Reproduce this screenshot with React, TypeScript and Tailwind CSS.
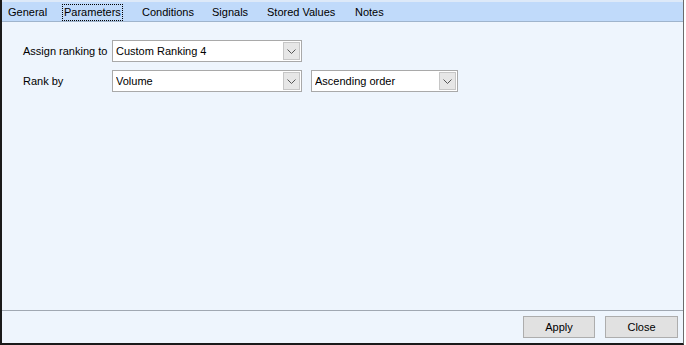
import React from "react";

const tabs = [
  { label: "General", w: "w-[56px]" },
  { label: "Parameters", w: "w-[78px]" },
  { label: "Conditions", w: "w-[70px]" },
  { label: "Signals", w: "w-[55px]" },
  { label: "Stored Values", w: "w-[88px]" },
  { label: "Notes", w: "w-[44px]" },
];

function Chevron() {
  return (
    <svg width="9" height="5" viewBox="0 0 9 5" fill="none">
      <path d="M0.5 0.5 L4.5 4.5 L8.5 0.5" stroke="#555" strokeWidth="1" />
    </svg>
  );
}

function Select({ value, width }: { value: string; width: string }) {
  return (
    <div className={`${width} h-[22px] flex items-center bg-white border border-[#a9a9a9] pl-[3px] pr-[1px]`}>
      <span className="flex-1 truncate">{value}</span>
      <div className="w-[17px] h-[18px] flex items-center justify-center bg-[#e6e6e6] border border-[#c6c6c6]">
        <Chevron />
      </div>
    </div>
  );
}

export default function App() {
  return (
    <div
      className="w-[686px] h-[345px] bg-white text-[11px] text-black"
      style={{ fontFamily: '"Liberation Sans", Arial, sans-serif' }}
    >
      <div className="w-[684px] h-[345px] flex flex-col bg-[#eef5fd] border-l-2 border-l-[#1a1a1a] border-r border-r-[#6b6b6b] border-b-2 border-b-[#1a1a1a]">
        {/* Tabs */}
        <div className="h-[22px] flex items-stretch bg-[#c0dafa] border-t-2 border-t-[#dde9f8] border-b border-b-[#9fb4cc]">
          {tabs.map((t, i) => (
            <div key={t.label} className={`${t.w} flex items-center pl-[4px] pt-[1px]`}>
              {i === 1 ? (
                <span className="px-[1px] leading-[15px] border border-dotted border-black">{t.label}</span>
              ) : (
                <span className="px-[2px] leading-[15px]">{t.label}</span>
              )}
            </div>
          ))}
        </div>

        {/* Body */}
        <div className="flex-1 pt-[18px] pl-[21px] flex flex-col gap-[8px]">
          <div className="flex items-center">
            <span className="w-[89px]">Assign ranking to</span>
            <Select value="Custom Ranking 4" width="w-[190px]" />
          </div>
          <div className="flex items-center">
            <span className="w-[89px]">Rank by</span>
            <Select value="Volume" width="w-[190px]" />
            <div className="ml-[9px]">
              <Select value="Ascending order" width="w-[147px]" />
            </div>
          </div>
        </div>

        {/* Footer */}
        <div className="h-[33px] border-t border-[#a0a8b2] flex items-start justify-end gap-[10px] pt-[5px] pr-[5px]">
          <button className="w-[72px] h-[22px] bg-[#e1e1e1] border border-[#adadad] text-[11px]">Apply</button>
          <button className="w-[73px] h-[22px] bg-[#e1e1e1] border border-[#adadad] text-[11px]">Close</button>
        </div>
      </div>
    </div>
  );
}
